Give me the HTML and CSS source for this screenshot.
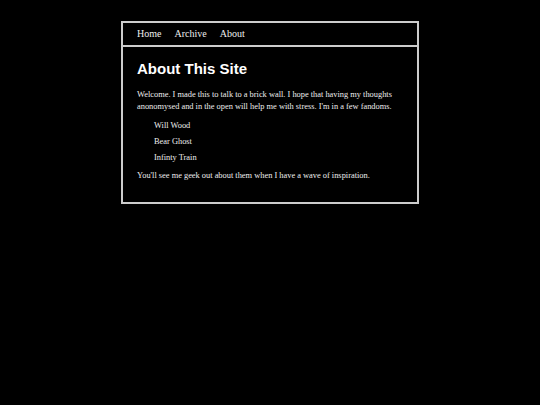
FILE: index.html
```html
<!doctype html>
<html>
<head>
    <meta charset='utf-8'>
    <title>About This Site</title>
    <link rel="stylesheet" href="styles.css">
</head>
<body>
    <div class="wrapper">
        <nav class="nav">
            <a href="#">Home</a>
            <a href="#">Archive</a>
            <a href="#">About</a>
        </nav>
        <main class="content">
            <h1>About This Site</h1>
            <p>Welcome. I made this to talk to a brick wall. I hope that having my thoughts anonomysed and in the open will help me with stress. I'm in a few fandoms.</p>
            <ul class="fandoms">
                <li>Will Wood</li>
                <li>Bear Ghost</li>
                <li>Infinty Train</li>
            </ul>
            <p>You'll see me geek out about them when I have a wave of inspiration.</p>
        </main>
    </div>
</body>
</html>
```

FILE: styles.css
```css
body {
    margin: 0;
    background: #000;
    color: #eee;
    font-family: "Liberation Serif", serif;
    font-size: 8.4px;
}

.wrapper {
    width: 294px;
    margin: 21px auto 0;
    border: 2px solid #ccc;
}

.nav {
    display: flex;
    gap: 13px;
    padding: 5px 14px 6px;
    border-bottom: 2px solid #ccc;
    font-size: 10px;
    line-height: 11px;
}

.nav a {
    color: #eee;
    text-decoration: none;
}

.content {
    padding: 12px 14px 20px;
}

h1 {
    margin: 0 0 11px;
    font-family: "Liberation Sans", sans-serif;
    font-size: 15px;
    line-height: 19px;
    color: #fff;
}

p {
    margin: 0;
    line-height: 12px;
}

.fandoms {
    list-style: none;
    margin: 5px 0 4px;
    padding-left: 17px;
}

.fandoms li {
    line-height: 16px;
}
```
